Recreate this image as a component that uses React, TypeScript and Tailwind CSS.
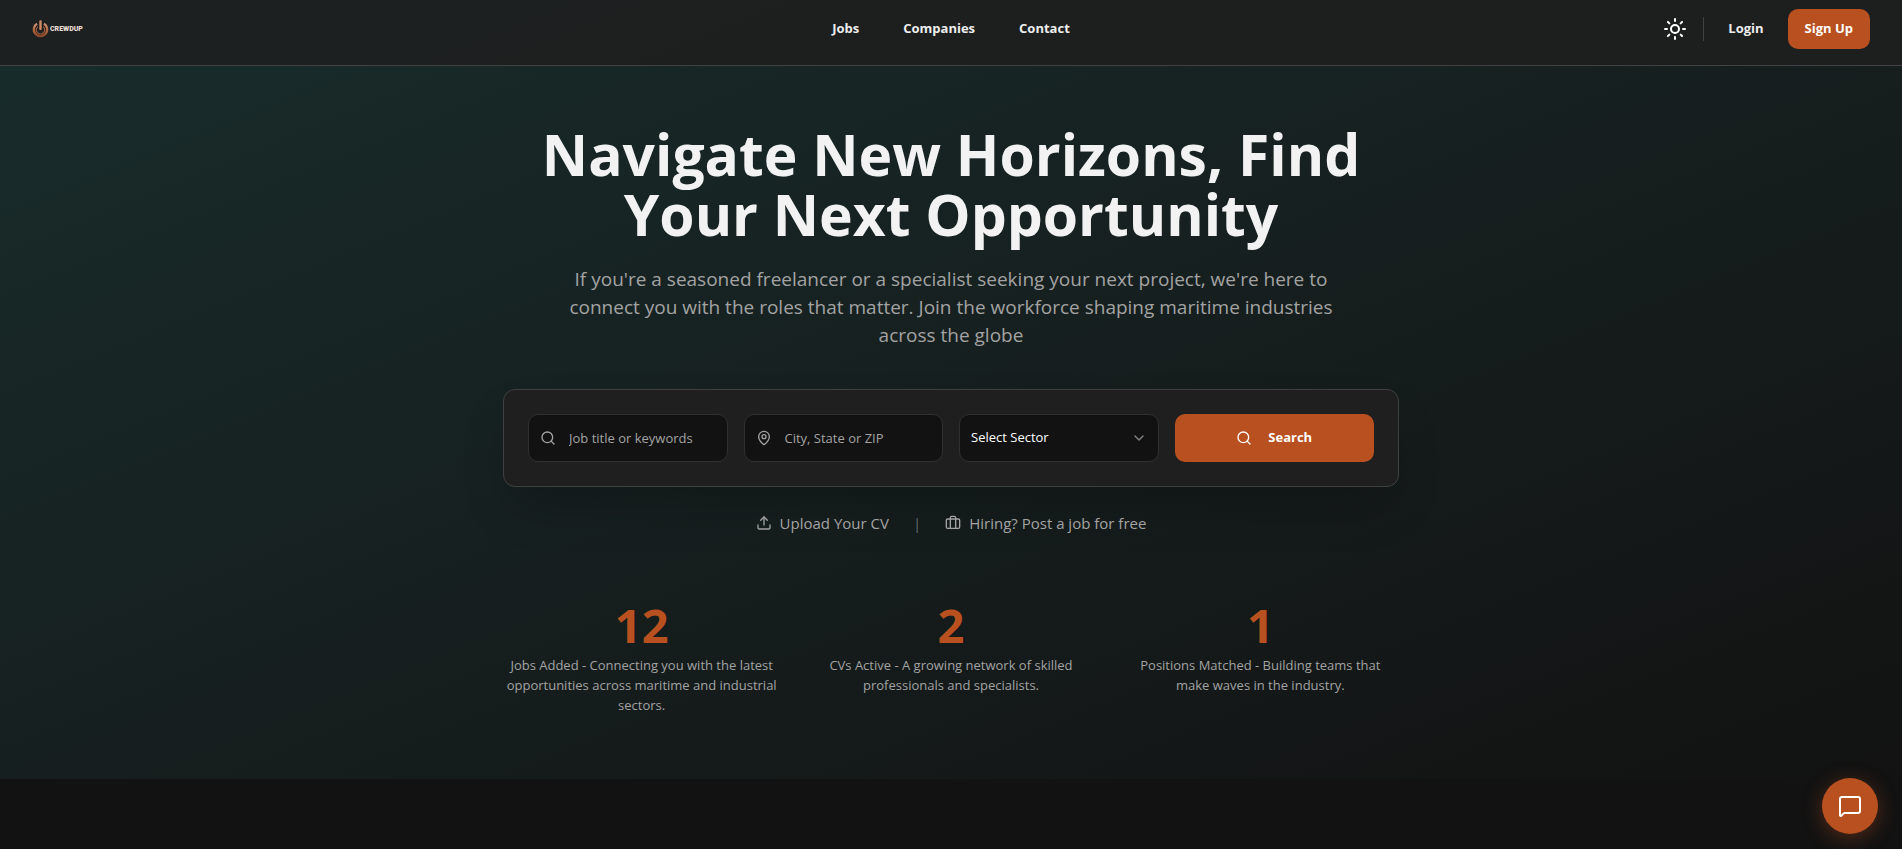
import React, { useState } from 'react';
import { Briefcase, ChevronDown, MapPin, MessageSquare, Search, Sun, Upload } from 'lucide-react';

const navLinks = ['Jobs', 'Companies', 'Contact'];

const stats = [
    { value: 12, text: 'Jobs Added - Connecting you with the latest opportunities across maritime and industrial sectors.' },
    { value: 2, text: 'CVs Active - A growing network of skilled professionals and specialists.' },
    { value: 1, text: 'Positions Matched - Building teams that make waves in the industry.' },
];

const Logo = () => (
    <a href="#" aria-label="CrewdUp" className="flex items-center gap-px">
        <svg width="17" height="18" viewBox="0 0 17 18" fill="none">
            <defs>
                <linearGradient id="copper" gradientUnits="userSpaceOnUse" x1="0" y1="1" x2="0" y2="17">
                    <stop offset="0" stopColor="#dba88c" />
                    <stop offset="0.5" stopColor="#b86c44" />
                    <stop offset="1" stopColor="#8a4526" />
                </linearGradient>
            </defs>
            <path d="M5 3.7 A6.7 6.7 0 1 0 12 3.7" stroke="url(#copper)" strokeWidth="2.4" />
            <path d="M5.8 6.6 A4.2 4.2 0 1 0 11.2 6.6" stroke="#9a5a3c" strokeWidth="1.2" />
            <rect x="7.3" y="0.3" width="2.4" height="9.7" rx="0.8" fill="#d08a64" />
        </svg>
        <span className="font-[Roboto,sans-serif] text-[7px] leading-none font-black text-[#e8dcd6]">CREWDUP</span>
    </a>
);

const Header = () => (
    <header className="border-b border-[#404342] bg-[#1f1f1f]/85 px-8 pt-[9px] pb-4">
        <div className="grid grid-cols-3 items-center">
            <Logo />
            <nav className="flex justify-center gap-11 text-[13px] font-bold text-[#ededed]">
                {navLinks.map((label) => (
                    <a key={label} href="#">{label}</a>
                ))}
            </nav>
            <div className="flex items-center justify-end">
                <button aria-label="Toggle theme" className="text-white">
                    <Sun size={24} />
                </button>
                <div className="mx-4 h-6 w-px bg-[#404040]" />
                <a href="#" className="px-2 text-[13px] font-bold text-[#ededed]">Login</a>
                <button className="ml-4 h-10 rounded-[10px] bg-[#b85020] px-[17px] text-[13px] font-bold text-white">
                    Sign Up
                </button>
            </div>
        </div>
    </header>
);

const SearchCard = () => {
    const [title, setTitle] = useState('');
    const [place, setPlace] = useState('');
    const inputClass = 'h-12 w-full rounded-[10px] border border-[#303030] bg-[#121212] pl-10 pr-3 text-[13px] text-white outline-none placeholder:text-[#a3a3a3]';

    return (
        <form
            onSubmit={(e) => e.preventDefault()}
            className="mt-10 grid grid-cols-4 gap-4 rounded-xl border border-[#404040] bg-[#1f1f1f] p-6 shadow-2xl"
        >
            <div className="relative">
                <Search size={16} className="absolute top-4 left-3 text-[#a3a3a3]" />
                <input
                    aria-label="Job title or keywords"
                    className={inputClass}
                    placeholder="Job title or keywords"
                    value={title}
                    onChange={(e) => setTitle(e.target.value)}
                />
            </div>
            <div className="relative">
                <MapPin size={16} className="absolute top-4 left-3 text-[#a3a3a3]" />
                <input
                    aria-label="City, State or ZIP"
                    className={inputClass}
                    placeholder="City, State or ZIP"
                    value={place}
                    onChange={(e) => setPlace(e.target.value)}
                />
            </div>
            <div className="relative">
                <select
                    aria-label="Sector"
                    className="h-12 w-full appearance-none rounded-[10px] border border-[#303030] bg-[#121212] px-[11px] text-[13px] text-white outline-none"
                >
                    <option>Select Sector</option>
                    <option>Maritime</option>
                    <option>Industrial</option>
                </select>
                <ChevronDown size={16} className="pointer-events-none absolute top-4 right-3 text-[#858585]" />
            </div>
            <button type="submit" className="flex h-12 items-center justify-center gap-4 rounded-[10px] bg-[#b85020] text-[13px] font-bold text-white">
                <Search size={16} />
                Search
            </button>
        </form>
    );
};

const App = () => {
    return (
        <div className="min-h-screen bg-[#121212] font-['Open_Sans',sans-serif]">
            <div className="bg-linear-to-br from-[#182d2c] to-[#121212]">
                <Header />
                <main className="mx-auto max-w-4xl pt-[58px] pb-16 text-center">
                    <h1 className="text-[57px] leading-[60px] font-bold text-[#f2f2f2]">
                        Navigate New Horizons, Find Your Next Opportunity
                    </h1>
                    <p className="mx-auto mt-[21px] max-w-3xl text-[19px] leading-7 text-[#a3a3a3]">
                        If you're a seasoned freelancer or a specialist seeking your next project, we're here to
                        connect you with the roles that matter. Join the workforce shaping maritime industries
                        across the globe
                    </p>
                    <SearchCard />
                    <div className="mt-6 flex items-center justify-center gap-6 text-[15px] leading-6 text-[#a3a3a3]">
                        <a href="#" className="flex items-center gap-2">
                            <Upload size={16} />
                            Upload Your CV
                        </a>
                        <span className="text-[#5f6a72]">|</span>
                        <a href="#" className="flex items-center gap-2">
                            <Briefcase size={16} />
                            Hiring? Post a job for free
                        </a>
                    </div>
                    <div className="mt-[66px] grid grid-cols-3 gap-8">
                        {stats.map((stat) => (
                            <div key={stat.value} className="px-px">
                                <div className="text-[47px] leading-12 font-bold text-[#b85020]">{stat.value}</div>
                                <p className="mt-[6px] text-[13px] leading-5 text-[#a3a3a3]">{stat.text}</p>
                            </div>
                        ))}
                    </div>
                </main>
            </div>
            <button
                aria-label="Open chat"
                className="fixed right-6 bottom-[15px] flex size-14 items-center justify-center rounded-full bg-[#b85020] text-white shadow-[0_4px_20px_rgba(184,80,32,0.4)]"
            >
                <MessageSquare size={24} />
            </button>
        </div>
    );
};

export default App;
